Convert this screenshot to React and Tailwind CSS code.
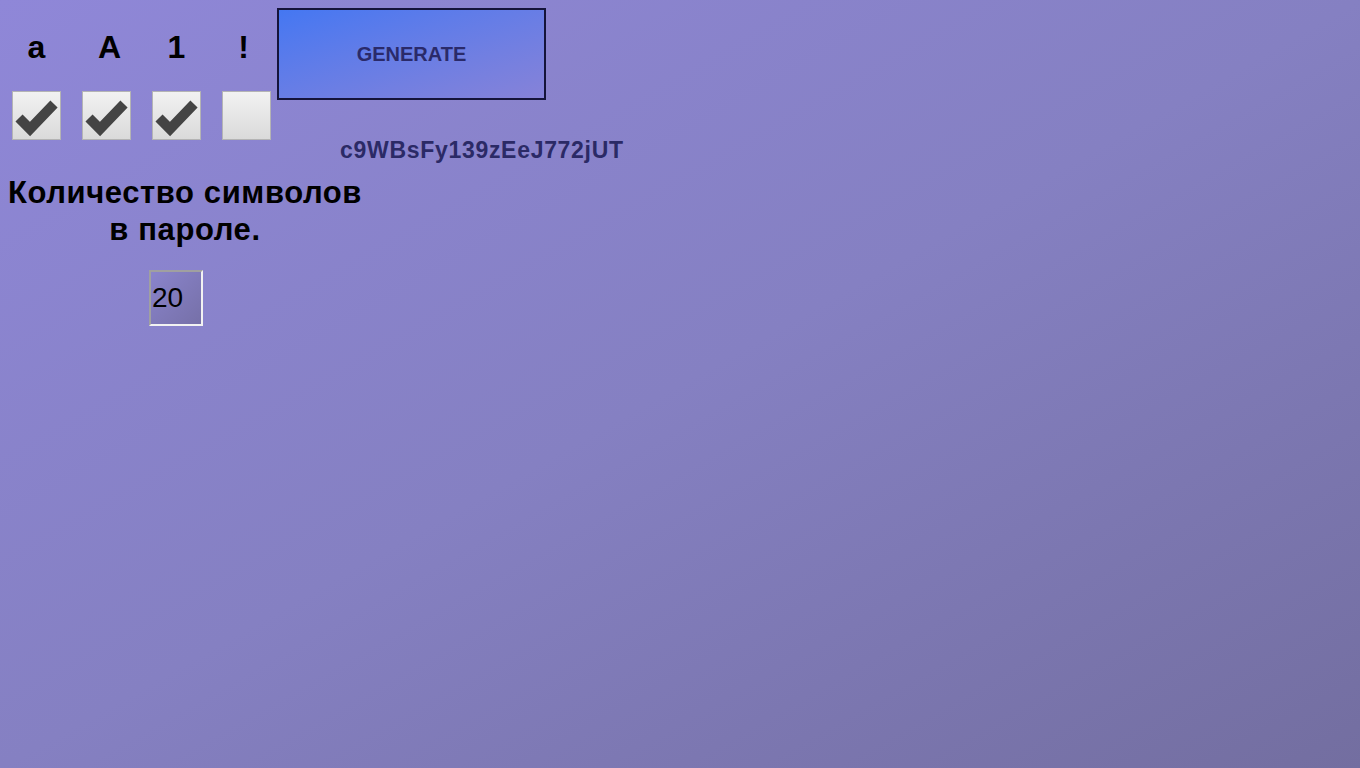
import { useState } from 'react'

const labels = [
  { t: 'a', cls: '' },
  { t: 'A', cls: 'pl-[6px]' },
  { t: '1', cls: '' },
  { t: '!', cls: 'pr-[6px]' },
]

function Check({ on, onToggle }) {
  return (
    <button onClick={onToggle}
      className="w-[49px] h-[49px] border border-[#b4b4b4] bg-gradient-to-b from-[#f2f2f2] to-[#dadada] flex items-center justify-center p-0">
      {on && (
        <svg width="47" height="47" viewBox="0 0 47 47">
          <polyline points="6,26 17,37 41,12" fill="none" stroke="#444444" strokeWidth="10" strokeLinejoin="miter" />
        </svg>
      )}
    </button>
  )
}

export default function App() {
  const [checks, setChecks] = useState([true, true, true, false])
  const [len, setLen] = useState('20')

  return (
    <div className="min-h-screen w-full bg-gradient-to-br from-[#8f87d8] via-[#8580c2] to-[#736ea0] font-['Liberation_Sans',Arial,sans-serif] text-black">
      <div className="flex items-start pt-2">
        <div className="flex flex-col pl-3 pt-[19px] gap-6">
          <div className="flex gap-[21px] h-10 items-center">
            {labels.map(l => (
              <span key={l.t} className={`w-[49px] text-center text-[32px] font-bold leading-10 ${l.cls}`}>{l.t}</span>
            ))}
          </div>
          <div className="flex gap-[21px]">
            {checks.map((c, i) => (
              <Check key={i} on={c} onToggle={() => setChecks(checks.map((v, j) => j === i ? !v : v))} />
            ))}
          </div>
        </div>
        <div className="ml-[6px] flex flex-col">
          <button className="w-[269px] h-[92px] border-2 border-[#15143a] bg-gradient-to-br from-[#4477f2] to-[#8682d8] text-[20px] font-bold text-[#2a2a6a]">
            GENERATE
          </button>
          <p className="ml-[63px] mt-[38px] text-[23px] font-bold leading-[25px] tracking-[0.7px] text-[#2b2a66] whitespace-nowrap">c9WBsFy139zEeJ772jUT</p>
        </div>
      </div>

      <h2 className="mt-[11px] w-[370px] text-center text-[31px] font-bold leading-[37px] tracking-[0.6px]">
        Количество символов<br />в пароле.
      </h2>
      <input value={len} onChange={e => setLen(e.target.value)}
        className="ml-[149px] mt-[22px] block w-[54px] h-[56px] border-2 border-t-[#a0a0a0] border-l-[#a0a0a0] border-b-[#f2f2f2] border-r-[#f2f2f2] bg-gradient-to-br from-[#8a84cc] to-[#7670a8] pl-[1px] text-[28px] text-black outline-none" />
    </div>
  )
}
